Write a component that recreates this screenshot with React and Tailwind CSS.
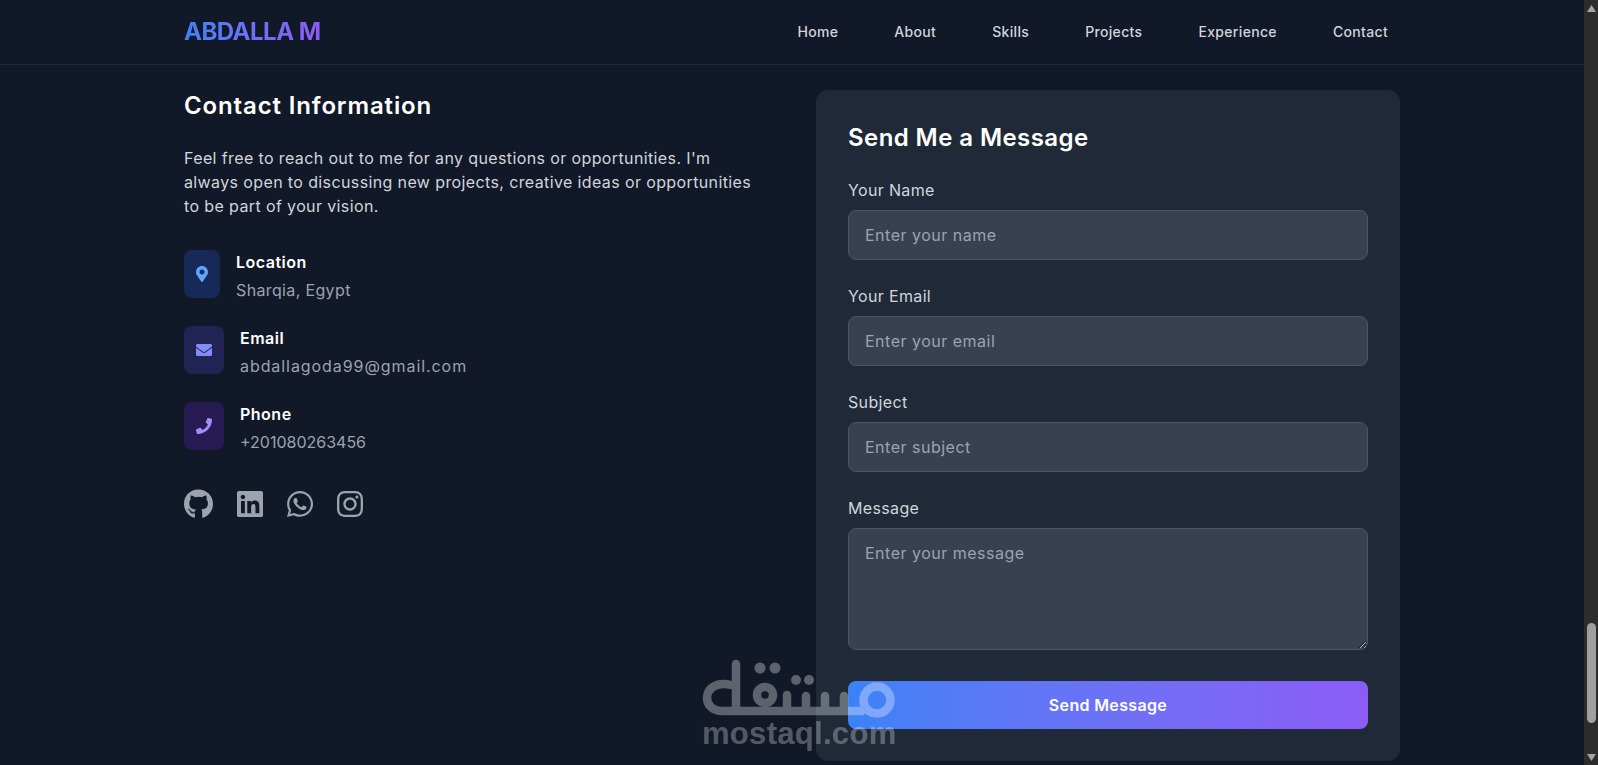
import { FaGithub, FaLinkedin, FaWhatsapp, FaInstagram, FaMapMarkerAlt, FaEnvelope, FaPhone } from "react-icons/fa";

const NAV = ["Home", "About", "Skills", "Projects", "Experience", "Contact"];

const CONTACTS = [
  { Icon: FaMapMarkerAlt, title: "Location", value: "Sharqia, Egypt", box: "w-9 bg-[#1e3a8a]/50", color: "text-[#60a5fa]", track: "tracking-[0.36px]" },
  { Icon: FaEnvelope, title: "Email", value: "abdallagoda99@gmail.com", box: "w-10 bg-[#312e81]/50", color: "text-[#818cf8]", track: "tracking-[0.93px]" },
  { Icon: FaPhone, title: "Phone", value: "+201080263456", box: "w-10 bg-[#4c1d95]/40", color: "text-[#a78bfa]", track: "tracking-normal" },
];

const SOCIALS = [
  { Icon: FaGithub, size: "h-[30px] w-[29px]" },
  { Icon: FaLinkedin, size: "h-[30px] w-[26px]" },
  { Icon: FaWhatsapp, size: "h-[30px] w-[26px]" },
  { Icon: FaInstagram, size: "h-[30px] w-[26px]" },
];

const FIELDS = [
  { label: "Your Name", placeholder: "Enter your name" },
  { label: "Your Email", placeholder: "Enter your email" },
  { label: "Subject", placeholder: "Enter subject" },
];

function Scrollbar() {
  return (
    <aside className="flex w-[14px] shrink-0 flex-col items-center bg-[#2c2c2c] pt-[5px]">
      <svg width="9" height="7" viewBox="0 0 9 7" className="shrink-0">
        <path d="M4.5 0L9 7H0z" fill="#a3a3a3" />
      </svg>
      <div className="mt-[611px] h-[100px] w-[9px] shrink-0 rounded-full bg-[#9f9f9f]" />
      <svg width="9" height="7" viewBox="0 0 9 7" className="mt-[31px] shrink-0">
        <path d="M4.5 7L9 0H0z" fill="#a3a3a3" />
      </svg>
    </aside>
  );
}

function Watermark() {
  return (
    <div className="pointer-events-none absolute left-[690px] top-[655px] h-[110px] w-[220px]">
      <svg width="220" height="70" viewBox="690 655 220 70" fill="none">
        <g opacity="0.32" stroke="#fff" strokeWidth="8.5" strokeLinecap="round">
          <path d="M736 664V708M731 685C716 681 707 689 707 698C707 706 714 711 722 711H862" />
          <circle cx="765" cy="695" r="8" />
          <path d="M787 710V695M806 710V696M825 710V696M844 710V696" />
          <circle cx="877" cy="700" r="13.5" />
          <g fill="#fff" stroke="none">
            <circle cx="760" cy="668" r="5.5" />
            <circle cx="775" cy="668" r="5.5" />
            <circle cx="796" cy="680" r="5" />
            <circle cx="809" cy="680" r="5" />
          </g>
        </g>
      </svg>
      <p className="absolute left-[12px] top-[63px] font-['Liberation_Sans',sans-serif] text-[31px] font-bold leading-none tracking-[0.3px] text-white/30">
        mostaql.com
      </p>
    </div>
  );
}

export default function App() {
  return (
    <div className="relative flex h-screen overflow-hidden bg-[#111827] font-[Inter,sans-serif] text-white">
      <main className="min-w-0 flex-1">
        <header className="border-b border-[#1f2937]">
          <div className="mx-auto flex h-16 max-w-7xl items-center justify-between px-8">
            <span className="bg-gradient-to-r from-[#3b82f6] to-[#8b5cf6] bg-clip-text text-2xl font-bold tracking-[-0.5px] text-transparent">
              ABDALLA M
            </span>
            <nav className="flex gap-8">
              {NAV.map((item) => (
                <a key={item} className="px-3 py-2 text-sm font-medium tracking-[0.33px] text-[#d1d5db]">
                  {item}
                </a>
              ))}
            </nav>
          </div>
        </header>

        <div className="mx-auto grid max-w-7xl grid-cols-2 gap-12 px-8 pt-[25px]">
          <section>
            <h3 className="mb-6 text-2xl font-semibold tracking-[0.86px]">Contact Information</h3>
            <p className="mb-8 text-base tracking-[0.38px] text-[#d1d5db]">
              Feel free to reach out to me for any questions or opportunities. I'm
              <br />
              always open to discussing new projects, creative ideas or opportunities
              <br />
              to be part of your vision.
            </p>

            <div className="flex flex-col gap-6">
              {CONTACTS.map(({ Icon, title, value, box, color, track }) => (
                <div key={title} className="flex items-start gap-4">
                  <div className={`flex h-12 shrink-0 items-center justify-center rounded-lg ${box} ${color}`}>
                    <Icon size={16} />
                  </div>
                  <div>
                    <h4 className="mb-1 text-base font-semibold tracking-[0.5px]">{title}</h4>
                    <p className={`text-base text-[#9ca3af] ${track}`}>{value}</p>
                  </div>
                </div>
              ))}
            </div>

            <div className="mt-8 flex gap-6">
              {SOCIALS.map(({ Icon, size }, i) => (
                <a key={i} className="flex h-9 items-center text-[#9ca3af]">
                  <Icon className={size} />
                </a>
              ))}
            </div>
          </section>

          <section className="rounded-xl bg-[#1f2937] p-8">
            <h3 className="mb-6 text-2xl font-semibold tracking-[0.42px]">Send Me a Message</h3>
            <form>
              {FIELDS.map((field) => (
                <div key={field.label} className="mb-6">
                  <label className="mb-2 block text-base tracking-[0.35px] text-[#d1d5db]">{field.label}</label>
                  <input
                    type="text"
                    placeholder={field.placeholder}
                    className="w-full rounded-lg border border-[#4b5563] bg-[#374151] px-4 py-3 text-base tracking-[0.5px] text-white placeholder:text-[#9ca3af]"
                  />
                </div>
              ))}
              <div className="mb-[25px]">
                <label className="mb-2 block text-base tracking-[0.35px] text-[#d1d5db]">Message</label>
                <textarea
                  rows={4}
                  placeholder="Enter your message"
                  className="w-full rounded-lg border border-[#4b5563] bg-[#374151] px-4 py-3 text-base tracking-[0.5px] text-white placeholder:text-[#9ca3af]"
                />
              </div>
              <button type="button" className="w-full rounded-lg bg-gradient-to-r from-[#3b82f6] to-[#8b5cf6] py-3 text-base font-semibold tracking-[0.35px] text-white">
                Send Message
              </button>
            </form>
          </section>
        </div>
      </main>

      <Scrollbar />
      <Watermark />
    </div>
  );
}
